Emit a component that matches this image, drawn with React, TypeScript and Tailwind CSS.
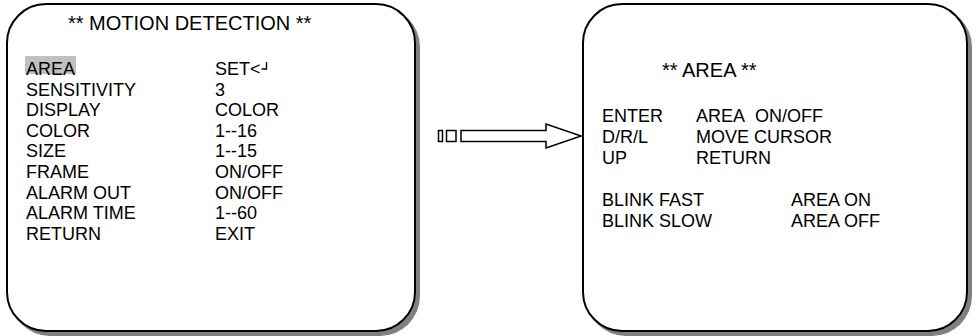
import React from 'react';

const leftRows: [string, string][] = [
  ['SENSITIVITY', '3'],
  ['DISPLAY', 'COLOR'],
  ['COLOR', '1--16'],
  ['SIZE', '1--15'],
  ['FRAME', 'ON/OFF'],
  ['ALARM OUT', 'ON/OFF'],
  ['ALARM TIME', '1--60'],
  ['RETURN', 'EXIT'],
];

const keyRows: [string, string][] = [
  ['ENTER', 'AREA\u00a0\u00a0ON/OFF'],
  ['D/R/L', 'MOVE CURSOR'],
  ['UP', 'RETURN'],
];

const blinkRows: [string, string][] = [
  ['BLINK FAST', 'AREA ON'],
  ['BLINK SLOW', 'AREA OFF'],
];

const EnterMark = () => (
  <svg width="7" height="9" viewBox="0 0 7 9" className="inline-block align-top mt-[3px]">
    <path d="M5.5 0 V7 H0.5" fill="none" stroke="black" strokeWidth="1.3" />
  </svg>
);

const Arrow = () => (
  <svg width="166" height="336" viewBox="0 0 166 336" className="shrink-0">
    <rect x="22.5" y="130.5" width="4" height="11" fill="white" stroke="black" strokeWidth="1.5" />
    <rect x="30.5" y="130.5" width="9.5" height="11" fill="white" stroke="black" strokeWidth="1.5" />
    <polygon
      points="45,130.5 130,130.5 130,124 165,136 130,148 130,141.5 45,141.5"
      fill="white"
      stroke="black"
      strokeWidth="1.5"
      strokeLinejoin="miter"
    />
  </svg>
);

export default function App() {
  return (
    <div className="w-[977px] h-[336px] bg-white flex pl-[6px] text-black font-['Liberation_Sans',Arial,sans-serif] overflow-hidden">
      {/* motion detection menu */}
      <div className="w-[410px] h-[329px] mt-[3px] shrink-0 border-2 border-black rounded-[40px] bg-white shadow-[4px_4px_0_0_#808080]">
        <div className="pt-[5.6px] pl-[60px] text-[20px] leading-[24px]">** MOTION DETECTION **</div>
        <div className="mt-[24.4px] pl-[18px] grid grid-cols-[189px_1fr] text-[18px] leading-[20.6px]">
          <div>
            <span className="inline-block h-[18px] pt-[4px] px-[1px] -ml-[1px] -mt-[4px] leading-[18px] bg-[#c0c0c0]">AREA</span>
          </div>
          <div>
            SET&lt;
            <EnterMark />
          </div>
          {leftRows.map(([k, v]) => (
            <React.Fragment key={k}>
              <div>{k}</div>
              <div>{v}</div>
            </React.Fragment>
          ))}
        </div>
      </div>

      <Arrow />

      {/* area sub menu */}
      <div className="w-[386px] h-[329px] mt-[3px] shrink-0 border-2 border-black rounded-[40px] bg-white shadow-[4px_4px_0_0_#808080]">
        <div className="pt-[52.6px] pl-[78px] text-[20px] leading-[24px]">** AREA **</div>
        <div className="mt-[24.2px] pl-[18px] grid grid-cols-[94px_1fr] text-[18px] leading-[21px]">
          {keyRows.map(([k, v]) => (
            <React.Fragment key={k}>
              <div>{k}</div>
              <div className="whitespace-pre">{v}</div>
            </React.Fragment>
          ))}
        </div>
        <div className="mt-[21px] pl-[18px] grid grid-cols-[189px_1fr] text-[18px] leading-[21px]">
          {blinkRows.map(([k, v]) => (
            <React.Fragment key={k}>
              <div>{k}</div>
              <div>{v}</div>
            </React.Fragment>
          ))}
        </div>
      </div>
    </div>
  );
}
